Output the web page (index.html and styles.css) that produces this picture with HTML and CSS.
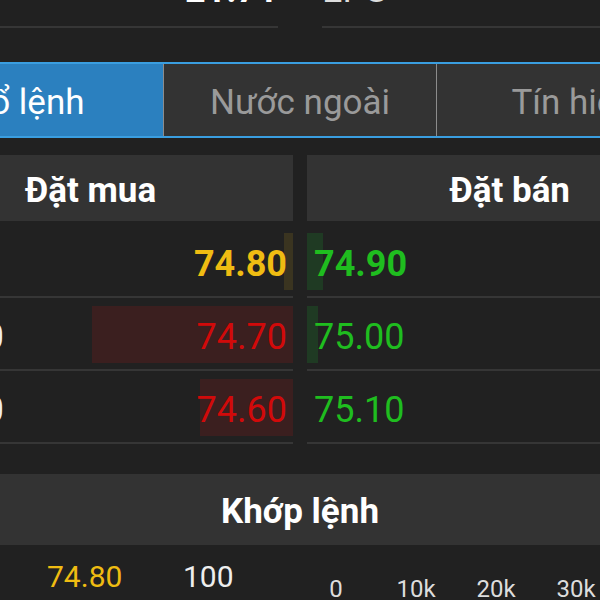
FILE: index.html
```html
<!doctype html>
<html>
<head>
  <title>Sổ lệnh</title>
  <link rel="stylesheet" href="styles.css">
</head>
<body>
  <div class="summary">
    <div class="sum-cell sum-value"><span>21.71</span></div>
    <div class="sum-cell sum-label"><span>EPS</span></div>
  </div>

  <div class="tabs">
    <div class="tab active">Sổ lệnh</div>
    <div class="tab">Nước ngoài</div>
    <div class="tab">Tín hiệu</div>
  </div>

  <div class="book">
    <div class="book-head head-buy">Đặt mua</div>
    <div class="book-head head-sell">Đặt bán</div>

    <div class="cell buy first">
      <span class="bar bar-ref" style="width:9px"></span>
      <span class="price ref strong">74.80</span>
    </div>
    <div class="cell sell first">
      <span class="bar bar-up" style="width:16px"></span>
      <span class="price up strong">74.90</span>
    </div>

    <div class="cell buy">
      <span class="bar bar-down" style="width:201px"></span>
      <span class="vol">12,500</span>
      <span class="price down">74.70</span>
    </div>
    <div class="cell sell">
      <span class="bar bar-up" style="width:11px"></span>
      <span class="price up">75.00</span>
    </div>

    <div class="cell buy">
      <span class="bar bar-down" style="width:93px"></span>
      <span class="vol">5,000</span>
      <span class="price down">74.60</span>
    </div>
    <div class="cell sell">
      <span class="price up">75.10</span>
    </div>
  </div>

  <div class="match-head">Khớp lệnh</div>
  <div class="match-row">
    <span class="match-price">74.80</span>
    <span class="match-vol">100</span>
    <div class="axis">
      <span>0</span>
      <span>10k</span>
      <span>20k</span>
      <span>30k</span>
    </div>
  </div>
</body>
</html>
```

FILE: styles.css
```css
html, body {
  overflow: hidden;
}
body {
  margin: 0;
  width: 600px;
  height: 600px;
  background-color: #212121;
  font-family: Roboto, "Noto Sans", sans-serif;
  color: #fff;
}

/* top summary line */
.summary {
  display: flex;
  gap: 44px;
  height: 28px;
}
.sum-cell {
  height: 26px;
  border-bottom: 2px solid #363636;
  overflow: hidden;
}
.sum-cell span {
  display: block;
  margin-top: -28px;
  font-size: 36px;
  line-height: 36px;
}
.sum-value {
  width: 278px;
  text-align: right;
  font-weight: bold;
}
.sum-label {
  flex: 1;
  color: #ddd;
}

/* tabs */
.tabs {
  display: flex;
  margin-top: 34px;
  margin-left: -109px;
  width: 818px;
  border-top: 2px solid #3a9ee0;
  border-bottom: 2px solid #3a9ee0;
}
.tab {
  flex-shrink: 0;
  width: 272px;
  height: 67px;
  padding-top: 5px;
  display: flex;
  align-items: center;
  justify-content: center;
  background-color: #333;
  color: #9a9a9a;
  font-size: 35px;
  border-left: 1px solid #8c8c8c;
}
.tab.active {
  background-color: #2b80bf;
  color: #fff;
  border-left: none;
}

/* order book */
.book {
  display: grid;
  grid-template-columns: 293px 1fr;
  column-gap: 14px;
  margin-top: 17px;
}
.book-head {
  height: 61px;
  padding-top: 5px;
  margin-bottom: 4px;
  display: flex;
  align-items: center;
  background-color: #333;
  font-size: 35px;
  font-weight: bold;
}
.head-buy {
  padding-left: 25px;
}
.head-sell {
  justify-content: flex-end;
  padding-right: 30px;
}

.cell {
  position: relative;
  height: 65px;
  padding-top: 6px;
  display: flex;
  align-items: center;
  border-bottom: 2px solid #363636;
  font-size: 36px;
}
.cell.buy {
  justify-content: flex-end;
  padding-right: 6px;
}
.cell.sell {
  padding-left: 7px;
}
.bar {
  position: absolute;
  top: 8px;
  bottom: 6px;
}
.buy .bar {
  right: 0;
}
.sell .bar {
  left: 0;
}
.bar-ref {
  background-color: #3a3420;
}
.bar-down {
  background-color: #3b1f1f;
}
.bar-up {
  background-color: #1f3a23;
}
.vol {
  position: relative;
  width: 120px;
  margin-left: -116px;
  margin-right: auto;
  text-align: right;
  color: #eee;
}
.price {
  position: relative;
}
.price.strong {
  font-weight: bold;
}
.ref {
  color: #efbc12;
}
.down {
  color: #d10a0a;
}
.up {
  color: #1fbd1f;
}

/* matched orders */
.match-head {
  margin-top: 30px;
  height: 67px;
  padding-top: 4px;
  display: flex;
  align-items: center;
  justify-content: center;
  background-color: #333;
  font-size: 35px;
  font-weight: bold;
}
.match-row {
  display: flex;
  align-items: flex-start;
  padding-top: 17px;
  font-size: 30px;
  line-height: 30px;
}
.match-row > * {
  flex-shrink: 0;
}
.match-price {
  margin-left: 47px;
  width: 136px;
  color: #efbc12;
}
.match-vol {
  width: 113px;
  color: #eee;
}
.axis {
  display: flex;
  margin-top: 15px;
  font-size: 24px;
  line-height: 24px;
  color: #ddd;
}
.axis span {
  width: 80px;
  text-align: center;
}
```
